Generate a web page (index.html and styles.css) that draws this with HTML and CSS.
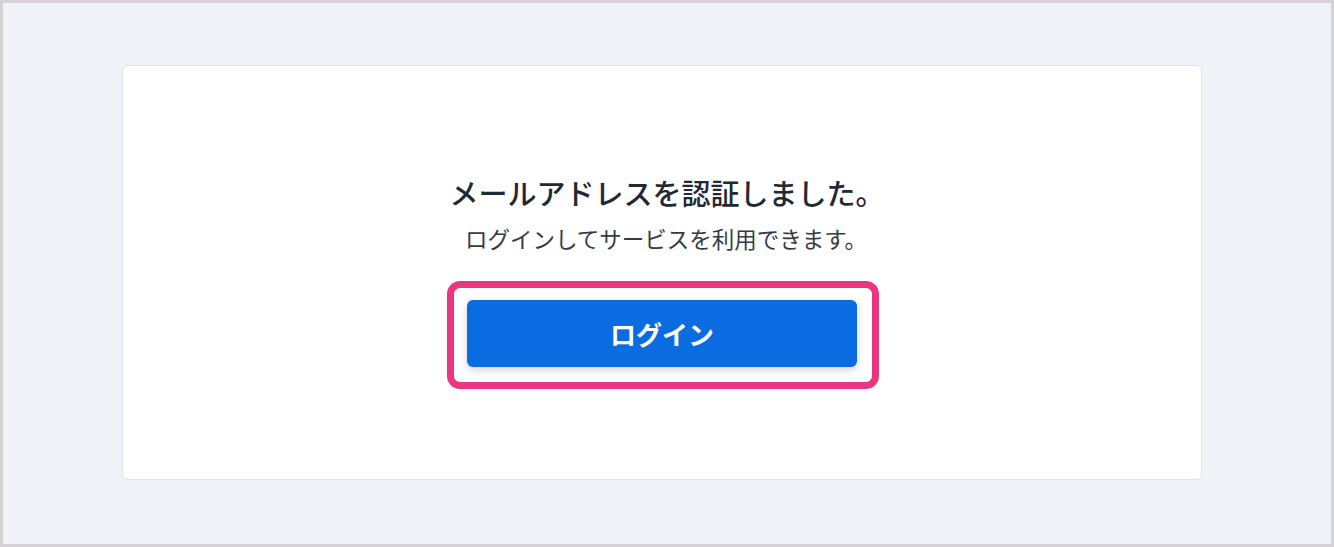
FILE: index.html
```html
<!DOCTYPE html>
<html lang="ja">
<head>
<meta charset="utf-8">
<link rel="stylesheet" href="styles.css">
</head>
<body>
<div class="frame">
  <div class="card">
    <h1 class="title">メールアドレスを認証しました。</h1>
    <p class="desc">ログインしてサービスを利用できます。</p>
    <div class="highlight">
      <button class="btn">ログイン</button>
    </div>
  </div>
</div>
</body>
</html>
```
FILE: styles.css
```css
html, body {
  margin: 0;
  padding: 0;
}
body {
  font-family: "Noto Sans CJK JP", "Noto Sans", sans-serif;
  background: #eff2f7;
}
.frame {
  box-sizing: border-box;
  width: 1334px;
  height: 547px;
  border: 3px solid #d5d2d5;
  background: #eff2f7;
  padding: 62px 0 0 119px;
}
.card {
  box-sizing: border-box;
  width: 1080px;
  height: 415px;
  background: #fff;
  border: 1px solid #e0e3e8;
  border-radius: 6px;
  display: flex;
  flex-direction: column;
  align-items: center;
  padding-top: 106px;
}
.title {
  margin: 0;
  padding-left: 10px;
  font-size: 29px;
  line-height: 40px;
  font-weight: 500;
  color: #222934;
}
.desc {
  margin: 10px 0 0;
  padding-left: 8px;
  font-size: 22.5px;
  line-height: 32px;
  font-weight: 400;
  color: #353b45;
}
.highlight {
  margin: 27px 0 0 2px;
  box-sizing: border-box;
  width: 432px;
  height: 108px;
  border: 7px solid #e93680;
  border-radius: 13px;
  padding: 12px 0 0 13px;
  background: #fff;
}
.btn {
  display: block;
  width: 390px;
  height: 67px;
  border: none;
  border-radius: 6px;
  background: #0b6be1;
  color: #fff;
  font-family: "Noto Sans CJK JP", "Noto Sans", sans-serif;
  font-size: 26px;
  font-weight: 700;
  box-shadow: 0 3px 8px rgba(0, 0, 0, 0.18);
  padding: 0;
}
```
